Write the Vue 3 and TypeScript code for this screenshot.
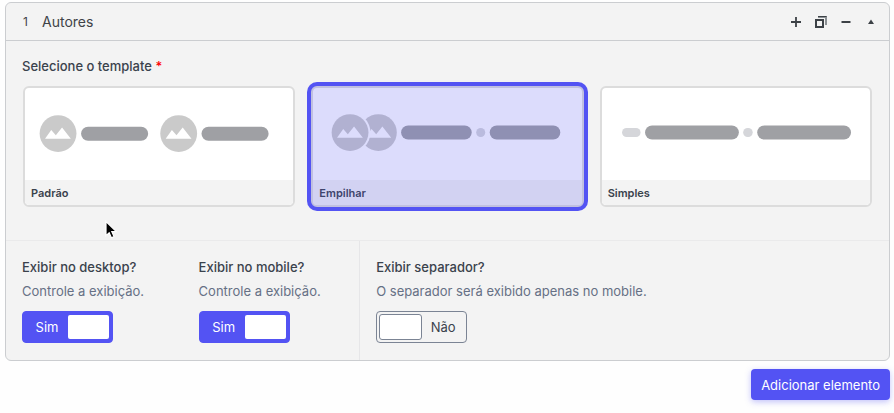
<script setup lang="ts">
import { ref } from 'vue'

interface Shape {
  kind: 'avatar' | 'bar' | 'soft' | 'ring'
  x: number
  y: number
  w?: number
  h?: number
}

interface Template {
  id: string
  label: string
  shapes: Shape[]
}

interface Toggle {
  id: string
  title: string
  help: string
  on: boolean
}

const templates: Template[] = [
  {
    id: 'padrao',
    label: 'Padrão',
    shapes: [
      { kind: 'avatar', x: 33, y: 45.5 },
      { kind: 'bar', x: 56, y: 38.7, w: 67, h: 14 },
      { kind: 'avatar', x: 153.5, y: 45.5 },
      { kind: 'bar', x: 176.3, y: 38.7, w: 67, h: 14 },
    ],
  },
  {
    id: 'empilhar',
    label: 'Empilhar',
    shapes: [
      { kind: 'avatar', x: 65.3, y: 44.5 },
      { kind: 'ring', x: 37, y: 44.5 },
      { kind: 'avatar', x: 37, y: 44.5 },
      { kind: 'bar', x: 88, y: 37.5, w: 70.5, h: 14 },
      { kind: 'soft', x: 163, y: 40, w: 9, h: 9 },
      { kind: 'bar', x: 176.5, y: 37.5, w: 70.5, h: 14 },
    ],
  },
  {
    id: 'simples',
    label: 'Simples',
    shapes: [
      { kind: 'soft', x: 20, y: 40, w: 18.5, h: 9 },
      { kind: 'bar', x: 43, y: 37.5, w: 93.7, h: 14 },
      { kind: 'soft', x: 141, y: 40, w: 9.5, h: 9 },
      { kind: 'bar', x: 155, y: 37.5, w: 93.7, h: 14 },
    ],
  },
]

const selected = ref('empilhar')
const toggles = ref<Toggle[]>([
  { id: 'desktop', title: 'Exibir no desktop?', help: 'Controle a exibição.', on: true },
  { id: 'mobile', title: 'Exibir no mobile?', help: 'Controle a exibição.', on: true },
  { id: 'separador', title: 'Exibir separador?', help: 'O separador será exibido apenas no mobile.', on: false },
])
</script>

<template>
  <main class="page">
    <section class="panel">
      <header class="panel-head">
        <span class="order">1</span>
        <h2 class="title">Autores</h2>
        <div class="tools">
          <button type="button" class="tool" aria-label="Adicionar">
            <svg viewBox="0 0 14 14"><path d="M7 2v10M2 7h10" stroke="currentColor" stroke-width="1.8" /></svg>
          </button>
          <button type="button" class="tool" aria-label="Duplicar">
            <svg viewBox="0 0 14 14" fill="none" stroke="currentColor">
              <path d="M4 2h8v8" stroke-width="2" stroke="#8b9094" />
              <path d="M4 1.5h8.5" stroke-width="1" />
              <path d="M4.5 4.5h5v6" stroke-width="1" stroke="#a4a8ab" />
              <rect x="2" y="5" width="7" height="7" stroke-width="2" />
            </svg>
          </button>
          <button type="button" class="tool" aria-label="Remover">
            <svg viewBox="0 0 14 14"><path d="M2.5 7h9" stroke="currentColor" stroke-width="2" /></svg>
          </button>
          <button type="button" class="tool" aria-label="Recolher">
            <svg viewBox="0 0 14 14"><path d="M7 4.5 10 9H4z" fill="currentColor" /></svg>
          </button>
        </div>
      </header>

      <fieldset class="choose">
        <legend class="legend">Selecione o template <span class="required">*</span></legend>
        <div class="cards">
          <label v-for="t in templates" :key="t.id" class="card" :class="{ active: selected === t.id }">
            <input v-model="selected" class="hidden-input" type="radio" name="template" :value="t.id" />
            <svg class="preview" viewBox="0 0 268 92" aria-hidden="true">
              <template v-for="(s, i) in t.shapes" :key="i">
                <g v-if="s.kind === 'avatar'" :transform="`translate(${s.x} ${s.y})`">
                  <circle r="18.4" fill="#cacaca" />
                  <path d="M-13 5.3-6.8-3.5-2.2 1.6 4-6 12.8 5.3z" fill="#fff" />
                </g>
                <circle v-else-if="s.kind === 'ring'" :cx="s.x" :cy="s.y" r="20.4" fill="#fff" />
                <rect
                  v-else
                  :x="s.x"
                  :y="s.y"
                  :width="s.w"
                  :height="s.h"
                  :rx="(s.h ?? 0) / 2"
                  :fill="s.kind === 'bar' ? '#9fa0a4' : '#d5d6da'"
                />
              </template>
            </svg>
            <span class="card-label">{{ t.label }}</span>
          </label>
        </div>
      </fieldset>

      <div class="fields">
        <div v-for="f in toggles" :key="f.id" class="field">
          <label class="field-title" :for="f.id">{{ f.title }}</label>
          <p class="help">{{ f.help }}</p>
          <label class="switch" :class="{ on: f.on }">
            <input :id="f.id" v-model="f.on" class="hidden-input" type="checkbox" />
            <span class="state">{{ f.on ? 'Sim' : 'Não' }}</span>
            <span class="knob"></span>
          </label>
        </div>
      </div>
    </section>

    <div class="actions">
      <button type="button" class="primary">Adicionar elemento</button>
    </div>

    <svg class="pointer" viewBox="0 0 14 20" aria-hidden="true">
      <path d="M2 1.5v14.2l3.2-3 2.2 5 2.6-1.1-2.2-5h4.5z" fill="#000" stroke="#fff" stroke-width="1.2" />
    </svg>
  </main>
</template>

<style>
body {
  margin: 0;
  background: #fefefe;
}
</style>

<style scoped>
.page {
  position: relative;
  padding: 2px 4px 12px 5px;
  font-family: Inter, 'Liberation Sans', sans-serif;
  font-size: 13px;
  line-height: 20px;
  color: #3a424c;
}
.page * {
  box-sizing: border-box;
}
.panel {
  border: 1px solid #cbcdd0;
  border-radius: 6px;
  background: #f3f3f3;
}
.panel-head {
  display: flex;
  align-items: center;
  height: 38px;
  padding: 0 11px 0 17px;
  border-bottom: 1px solid #cbcdd0;
  color: #3f4347;
}
.order {
  width: 19px;
  font-size: 12px;
}
.title {
  margin: 0;
  font-size: 14px;
  font-weight: 400;
}
.tools {
  display: flex;
  gap: 11px;
  margin-left: auto;
}
.tool {
  display: block;
  width: 14px;
  height: 14px;
  padding: 0;
  border: 0;
  background: none;
  color: #3c4146;
}
.tool svg {
  display: block;
  width: 14px;
  height: 14px;
}
.choose {
  min-width: 0;
  margin: 0;
  padding: 15px 16px 33px;
  border: 0;
}
.legend {
  float: left;
  width: 100%;
  padding: 0;
  font-weight: 500;
}
.required {
  color: #f00;
}
.cards {
  clear: both;
  display: grid;
  grid-template-columns: repeat(3, 1fr);
  gap: 16px;
  padding: 10px 1px 0;
}
.card {
  position: relative;
  border: 2px solid #dcdcdc;
  border-radius: 6px;
  background: #fff;
  overflow: hidden;
}
.card.active {
  overflow: visible;
  box-shadow: 0 0 0 4px #5353f3;
}
.card.active::after {
  content: '';
  position: absolute;
  inset: -2px;
  border-radius: 5px;
  background: rgba(80, 80, 240, 0.2);
}
.hidden-input {
  position: absolute;
  width: 1px;
  height: 1px;
  margin: 0;
  opacity: 0;
}
.preview {
  display: block;
  width: 100%;
}
.card-label {
  display: block;
  padding: 1px 6px 0;
  background: #f3f3f3;
  border-radius: 0 0 4px 4px;
  font-size: 11px;
  line-height: 24px;
  font-weight: 600;
}
.fields {
  display: grid;
  grid-template-columns: 1fr 1fr 3fr;
  border-top: 1px solid #eaeaeb;
}
.field {
  min-width: 0;
  padding: 16px 0 17px 16px;
}
.field:last-child {
  border-left: 1px solid #e6e6e8;
}
.field-title {
  display: block;
  font-weight: 500;
}
.help {
  margin: 4px 0 10px;
  color: #667085;
}
.switch {
  position: relative;
  display: flex;
  align-items: center;
  flex-direction: row-reverse;
  width: 91px;
  height: 32px;
  padding: 2px;
  border: 1px solid #7b8494;
  border-radius: 4px;
}
.state {
  flex: 1;
  text-align: center;
}
.knob {
  width: 43px;
  height: 26px;
  border: 1px solid #7b8494;
  border-radius: 3px;
  background: #fff;
}
.switch.on {
  flex-direction: row;
  padding: 3px;
  border-color: #5353f3;
  background: #5353f3;
  color: #fff;
}
.switch.on .knob {
  width: 41px;
  height: 24px;
  border: 0;
  border-radius: 2px;
}
.actions {
  display: flex;
  justify-content: flex-end;
  padding-top: 8px;
}
.primary {
  height: 31px;
  padding: 0 10px;
  border: 0;
  border-radius: 4px;
  background: #5353f3;
  box-shadow: 0 2px 6px rgba(83, 83, 243, 0.35);
  color: #fff;
  font: inherit;
}
.pointer {
  position: absolute;
  left: 104px;
  top: 220px;
  width: 14px;
  height: 20px;
}
</style>
